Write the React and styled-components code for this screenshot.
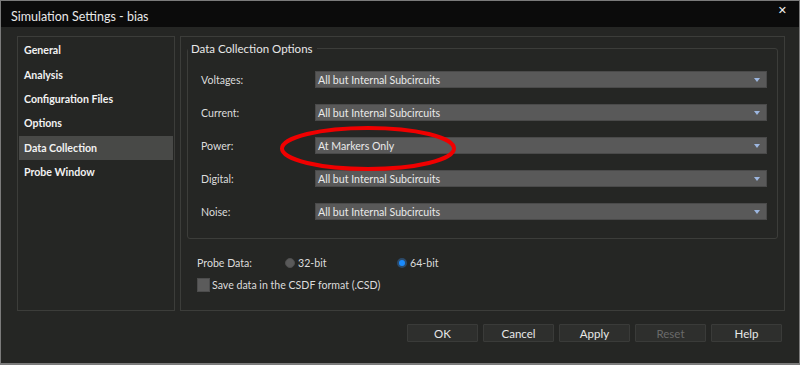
import React, { useState } from "react";
import styled, { createGlobalStyle } from "styled-components";

const GlobalStyle = createGlobalStyle`
  html, body {
    margin: 0;
    padding: 0;
    background: #252624;
  }
  body {
    font-family: Lato, "Open Sans", sans-serif;
    font-size: 10.6px;
    color: #e4e4e4;
  }
`;

const Window = styled.div`
  position: relative;
  width: 800px;
  height: 365px;
  box-sizing: border-box;
  border: 1px solid #7b7b7b;
  border-bottom-width: 2px;
  background: #252624;
  display: flex;
  flex-direction: column;
  overflow: hidden;
`;

const TitleBar = styled.div`
  height: 26px;
  background: #0b0b0b;
  display: flex;
  align-items: center;
  justify-content: space-between;
  padding: 0 10px 0 10px;
  font-size: 12.5px;
  color: #e8e8e8;
`;

const Title = styled.span`
  margin-top: 4px;
`;

const Close = styled.span`
  font-family: "DejaVu Sans", sans-serif;
  font-weight: bold;
  font-size: 11px;
  margin-top: -7px;
  margin-right: 2px;
  color: #f0f0f0;
`;

const Body = styled.div`
  flex: 1;
  display: flex;
  flex-direction: column;
  padding: 9px 14px 0 16px;
`;

const Content = styled.div`
  display: flex;
  gap: 5px;
  height: 275px;
`;

const Sidebar = styled.ul`
  list-style: none;
  margin: 0;
  padding: 1px 1px;
  width: 158px;
  box-sizing: border-box;
  border: 1px solid #3c3d3a;
`;

const NavItem = styled.li`
  height: 24.4px;
  display: flex;
  align-items: center;
  padding-left: 5px;
  font-weight: bold;
  font-size: 10.6px;
  color: #f2f2f2;
  background: ${(p) => (p.$active ? "#484947" : "transparent")};
  cursor: default;
`;

const Panel = styled.div`
  flex: 1;
  box-sizing: border-box;
  border: 1px solid #3c3d3a;
  padding: 5px 6px 0 6px;
  display: flex;
  flex-direction: column;
`;

const Group = styled.fieldset`
  margin: 0;
  padding: 16px 10px 18px 13px;
  border: 1px solid #3c3d3a;
  border-radius: 3px;
  display: flex;
  flex-direction: column;
  gap: 16px;
`;

const Legend = styled.legend`
  padding: 0 4px 0 3px;
  margin-left: -13px;
  font-size: 11.5px;
  color: #e8e8e8;
`;

const Row = styled.div`
  display: flex;
  align-items: center;
  height: 17px;
`;

const Label = styled.span`
  width: 114px;
  color: #dcdcdc;
`;

const Select = styled.div`
  flex: 1;
  height: 17px;
  box-sizing: border-box;
  background: #595959;
  border: 1px solid #4a4a4a;
  display: flex;
  align-items: center;
  justify-content: space-between;
  padding: 0 6px 0 2px;
  color: #eaeaea;
`;

const Arrow = styled.span`
  width: 0;
  height: 0;
  border-left: 3.5px solid transparent;
  border-right: 3.5px solid transparent;
  border-top: 4px solid #9db7e0;
`;

const ProbeRow = styled.div`
  display: flex;
  align-items: center;
  margin-top: 17px;
  padding-left: 10px;
  height: 14px;
`;

const ProbeLabel = styled.span`
  width: 88px;
  color: #dcdcdc;
`;

const RadioOption = styled.label`
  display: flex;
  align-items: center;
  gap: 3px;
  width: 112px;
  color: #dcdcdc;
`;

const RadioDot = styled.span`
  width: 10px;
  height: 10px;
  border-radius: 50%;
  box-sizing: border-box;
  background: ${(p) => (p.$checked ? "#1a8cff" : "#5a5a5a")};
  border: ${(p) => (p.$checked ? "2px solid #2b4a6a" : "1px solid #4e4e4e")};
`;

const CheckRow = styled.label`
  display: flex;
  align-items: center;
  gap: 2px;
  margin-top: 8px;
  padding-left: 10px;
  color: #dcdcdc;
`;

const CheckBox = styled.span`
  width: 13px;
  height: 14px;
  background: #5b5b5b;
  border: 1px solid #4c4c4c;
  box-sizing: border-box;
`;

const Buttons = styled.div`
  display: flex;
  justify-content: flex-end;
  gap: 5px;
  margin-top: 13px;
  padding-right: 3px;
`;

const Button = styled.button`
  width: 71px;
  height: 18px;
  box-sizing: border-box;
  background: #2e2f2d;
  border: 1px solid #3a3b39;
  border-radius: 1px;
  font-family: inherit;
  font-size: 11.5px;
  padding: 1px 0 0;
  color: ${(p) => (p.disabled ? "#6a6a6a" : "#e8e8e8")};
`;

const Annotation = styled.svg`
  position: absolute;
  left: 277px;
  top: 123px;
  pointer-events: none;
`;

const navItems = [
  "General",
  "Analysis",
  "Configuration Files",
  "Options",
  "Data Collection",
  "Probe Window",
];

const rows = [
  ["Voltages:", "All but Internal Subcircuits"],
  ["Current:", "All but Internal Subcircuits"],
  ["Power:", "At Markers Only"],
  ["Digital:", "All but Internal Subcircuits"],
  ["Noise:", "All but Internal Subcircuits"],
];

export default function App() {
  const [active, setActive] = useState("Data Collection");
  const [bits, setBits] = useState(64);

  return (
    <>
      <GlobalStyle />
      <Window>
        <TitleBar>
          <Title>Simulation Settings - bias</Title>
          <Close>✕</Close>
        </TitleBar>
        <Body>
          <Content>
            <Sidebar>
              {navItems.map((item) => (
                <NavItem
                  key={item}
                  $active={item === active}
                  onClick={() => setActive(item)}
                >
                  {item}
                </NavItem>
              ))}
            </Sidebar>
            <Panel>
              <Group>
                <Legend>Data Collection Options</Legend>
                {rows.map(([label, value]) => (
                  <Row key={label}>
                    <Label>{label}</Label>
                    <Select>
                      <span>{value}</span>
                      <Arrow />
                    </Select>
                  </Row>
                ))}
              </Group>
              <ProbeRow>
                <ProbeLabel>Probe Data:</ProbeLabel>
                <RadioOption onClick={() => setBits(32)}>
                  <RadioDot $checked={bits === 32} />
                  32-bit
                </RadioOption>
                <RadioOption onClick={() => setBits(64)}>
                  <RadioDot $checked={bits === 64} />
                  64-bit
                </RadioOption>
              </ProbeRow>
              <CheckRow>
                <CheckBox />
                Save data in the CSDF format (.CSD)
              </CheckRow>
            </Panel>
          </Content>
          <Buttons>
            <Button>OK</Button>
            <Button>Cancel</Button>
            <Button>Apply</Button>
            <Button disabled>Reset</Button>
            <Button>Help</Button>
          </Buttons>
        </Body>
        <Annotation width="180" height="50" viewBox="0 0 180 50">
          <ellipse
            cx="90"
            cy="24.5"
            rx="86"
            ry="20.5"
            fill="none"
            stroke="#f00000"
            strokeWidth="4"
          />
        </Annotation>
      </Window>
    </>
  );
}
